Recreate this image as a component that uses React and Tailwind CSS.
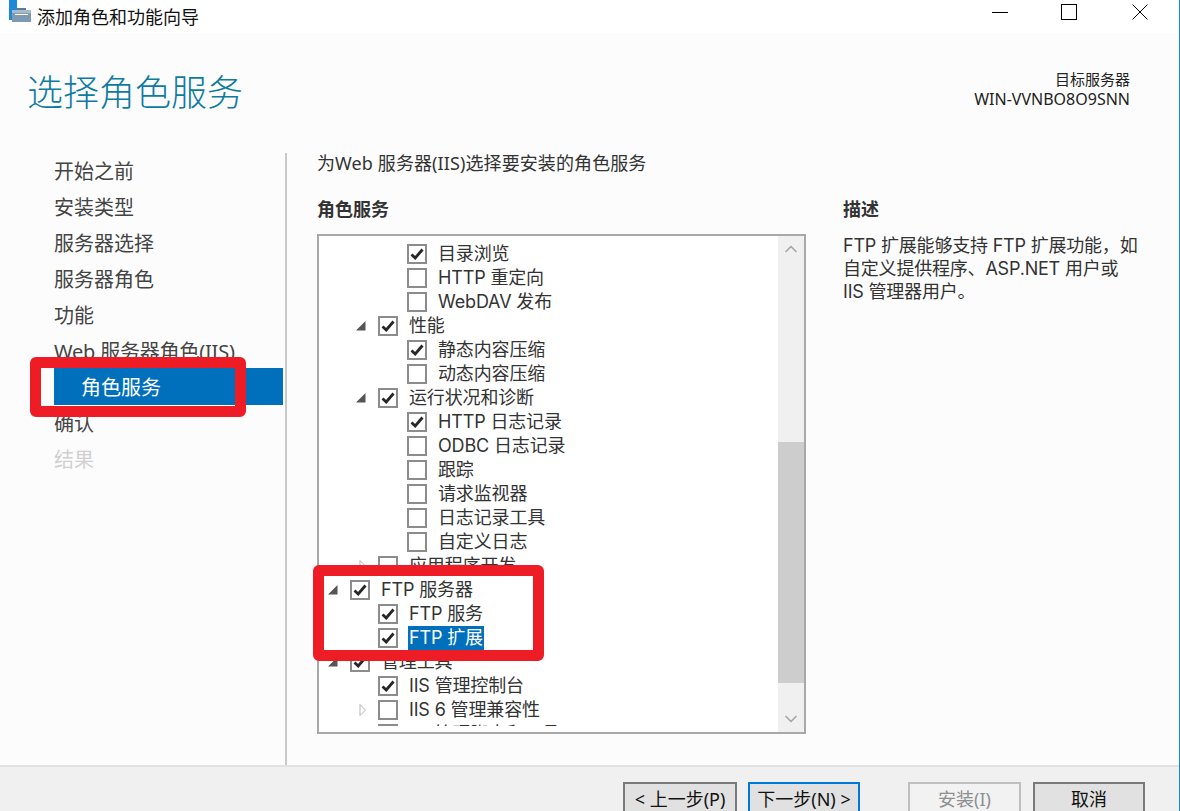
import { ChevronDown, ChevronUp } from 'lucide-react'

const steps = [
  { label: '开始之前' },
  { label: '安装类型' },
  { label: '服务器选择' },
  { label: '服务器角色' },
  { label: '功能' },
  { label: 'Web 服务器角色(IIS)', tight: true },
  { label: '角色服务', active: true },
  { label: '确认' },
  { label: '结果', disabled: true },
]

// level: indent of the row, arrow: open / closed / none
const rows = [
  { label: '目录浏览', level: 2, checked: true },
  { label: 'HTTP 重定向', level: 2 },
  { label: 'WebDAV 发布', level: 2 },
  { label: '性能', level: 1, checked: true, arrow: 'open' },
  { label: '静态内容压缩', level: 2, checked: true },
  { label: '动态内容压缩', level: 2 },
  { label: '运行状况和诊断', level: 1, checked: true, arrow: 'open' },
  { label: 'HTTP 日志记录', level: 2, checked: true },
  { label: 'ODBC 日志记录', level: 2 },
  { label: '跟踪', level: 2 },
  { label: '请求监视器', level: 2 },
  { label: '日志记录工具', level: 2 },
  { label: '自定义日志', level: 2 },
  { label: '应用程序开发', level: 1, arrow: 'closed' },
  { label: 'FTP 服务器', level: 0, checked: true, arrow: 'open' },
  { label: 'FTP 服务', level: 1, checked: true },
  { label: 'FTP 扩展', level: 1, checked: true, selected: true },
  { label: '管理工具', level: 0, checked: true, arrow: 'open' },
  { label: 'IIS 管理控制台', level: 1, checked: true },
  { label: 'IIS 6 管理兼容性', level: 1, arrow: 'closed' },
  { label: 'IIS 管理脚本和工具', level: 1 },
]

const levelPadding = ['pl-[9px]', 'pl-[37px]', 'pl-[66px]']

function Arrow({ type }) {
  if (type === 'open') {
    return (
      <svg width="10" height="10" viewBox="0 0 10 10" className="mr-[12px] shrink-0">
        <path d="M0 9.5 L9.5 9.5 L9.5 0 Z" fill="#555555" />
      </svg>
    )
  }
  if (type === 'closed') {
    return (
      <svg width="10" height="14" viewBox="0 0 10 14" className="mr-[12px] shrink-0">
        <path d="M4 1.5 L9.5 7 L4 12.5 Z" fill="#ffffff" stroke="#b5b5b5" />
      </svg>
    )
  }
  return <div className="mr-[12px] w-[10px] shrink-0" />
}

function TreeRow({ row }) {
  return (
    <div className={`flex h-[24px] items-center ${levelPadding[row.level]}`}>
      <Arrow type={row.arrow} />
      <div className="flex h-[20px] w-[20px] shrink-0 items-center justify-center border-2 border-[#8c8c8c] bg-white">
        {row.checked && (
          <svg width="14" height="12" viewBox="0 0 14 12">
            <path d="M1.5 6.5 L5.2 10 L12.5 1.5" fill="none" stroke="#262626" strokeWidth="2.8" />
          </svg>
        )}
      </div>
      <span
        className={`ml-[10px] whitespace-nowrap px-px leading-[24px] tracking-[-0.15px] ${
          row.selected ? 'bg-[#0070bd] text-white' : 'text-[#333333]'
        }`}
      >
        {row.label}
      </span>
    </div>
  )
}

function Scrollbar() {
  return (
    <div className="flex w-[26px] shrink-0 flex-col bg-[#f0f0f0]">
      <div className="flex h-[26px] items-center justify-center">
        <ChevronUp size={20} strokeWidth={2} className="text-[#a6a6a6]" />
      </div>
      <div className="h-[180px]" />
      <div className="h-[241px] bg-[#cdcdcd]" />
      <div className="flex-1" />
      <div className="flex h-[26px] items-center justify-center">
        <ChevronDown size={20} strokeWidth={2} className="text-[#a6a6a6]" />
      </div>
    </div>
  )
}

function FooterButton({ children, variant, className }) {
  const tone =
    variant === 'primary'
      ? 'border-[#0078d7] bg-[#e1e1e1] text-[#111111]'
      : variant === 'disabled'
        ? 'border-[#bfbfbf] bg-[#f2f2f2] text-[#8f8f8f]'
        : 'border-[#7a7a7a] bg-[#e1e1e1] text-[#111111]'
  return (
    <button className={`h-[33px] shrink-0 whitespace-nowrap border-2 text-[18px] leading-none ${tone} ${className}`}>
      {children}
    </button>
  )
}

export default function App() {
  return (
    <div className="relative flex h-[811px] w-[1180px] flex-col overflow-hidden border-r border-[#1a86d9] bg-[#fcfcfc] font-['Noto_Sans','Noto_Sans_CJK_SC',sans-serif] text-[18px] text-[#333333]">
      <div className="flex h-[33px] shrink-0 items-center bg-white">
        <svg width="23" height="22" viewBox="0 0 23 22" className="ml-[9px] shrink-0 self-start">
          <rect x="0" y="0" width="8" height="20" fill="#1e88d9" />
          <rect x="3" y="13" width="19" height="9" fill="#7d9ab0" />
          <rect x="3" y="10" width="19" height="3" fill="#a5bacb" />
          <rect x="8" y="8" width="9" height="2" fill="#5c7c94" />
          <rect x="6" y="14" width="13" height="1" fill="#ffffff" />
        </svg>
        <span className="ml-[5px] text-[18px] leading-none text-[#111111]">添加角色和功能向导</span>
        <div className="ml-auto flex items-start self-start pr-[31px] pt-[4px]">
          <svg width="16" height="16" viewBox="0 0 16 16">
            <path d="M0 8.5 H16" stroke="#000000" />
          </svg>
          <svg width="16" height="16" viewBox="0 0 16 16" className="ml-[53px]">
            <rect x="0.5" y="0.5" width="15" height="15" fill="none" stroke="#000000" />
          </svg>
          <svg width="16" height="16" viewBox="0 0 16 16" className="ml-[55px]">
            <path d="M0.5 0.5 L15.5 15.5 M15.5 0.5 L0.5 15.5" stroke="#000000" />
          </svg>
        </div>
      </div>

      <div className="flex h-[120px] shrink-0 items-start justify-between">
        <h1 className="ml-[27px] mt-[35px] text-[36px] font-light leading-[50px] text-[#0f7ba1]">选择角色服务</h1>
        <div className="mr-[49px] mt-[36px] text-right text-[15px] leading-[20px] text-[#222222]">
          <div>目标服务器</div>
          <div className="text-[16px]">WIN-VVNBO8O9SNN</div>
        </div>
      </div>

      <div className="flex min-h-0 flex-1">
        <nav className="flex w-[287px] shrink-0 flex-col border-r-2 border-[#c8c8c8] text-[20px]">
          {steps.map(step => (
            <div
              key={step.label}
              className={`flex shrink-0 items-center whitespace-nowrap ${step.tight ? 'tracking-[-0.2px]' : ''} ${
                step.active
                  ? 'ml-[54px] mr-[2px] mt-[-1px] h-[37px] bg-[#0070bd] pl-[27px] pt-[3px] text-white'
                  : step.disabled
                    ? 'h-[36px] pl-[54px] pt-px text-[#d0d0d0]'
                    : 'h-[36px] pl-[54px] pt-px text-[#444444]'
              }`}
            >
              {step.label}
            </div>
          ))}
        </nav>

        <main className="min-w-0 flex-1 pl-[30px]">
          <p className="leading-[20px] tracking-[0.1px] text-[#333333]">为Web 服务器(IIS)选择要安装的角色服务</p>
          <div className="mt-[24px] flex">
            <section className="w-[489px] shrink-0">
              <h2 className="text-[18px] font-bold leading-[24px] text-[#333333]">角色服务</h2>
              <div className="mt-[13px] flex h-[500px] border-2 border-[#a8a8a8] bg-white">
                <div className="h-[490px] min-w-0 flex-1 overflow-hidden pt-[6px] font-['Inter','Noto_Sans_CJK_SC',sans-serif]">
                  {rows.map(row => (
                    <TreeRow key={row.label} row={row} />
                  ))}
                </div>
                <Scrollbar />
              </div>
            </section>
            <aside className="ml-[37px] w-[310px]">
              <h2 className="text-[18px] font-bold leading-[24px] text-[#333333]">描述</h2>
              <p className="mt-[13px] font-['Inter','Noto_Sans_CJK_SC',sans-serif] text-[18px] leading-[23px] tracking-[-0.2px] text-[#333333]">
                FTP 扩展能够支持 FTP 扩展功能，如<br />
                自定义提供程序、ASP.NET 用户或<br />
                IIS 管理器用户。
              </p>
            </aside>
          </div>
        </main>
      </div>

      <footer className="flex h-[46px] shrink-0 items-start border-t-2 border-[#e2e2e2] bg-[#f0f0f0] pl-[623px] pt-[15px]">
        <FooterButton className="w-[114px]">&lt; 上一步(P)</FooterButton>
        <FooterButton variant="primary" className="ml-[11px] w-[112px]">下一步(N) &gt;</FooterButton>
        <FooterButton variant="disabled" className="ml-[48px] w-[113px]">安装(I)</FooterButton>
        <FooterButton className="ml-[12px] w-[112px]">取消</FooterButton>
      </footer>

      {/* red annotation frames drawn over the screenshot */}
      <div className="absolute left-[30px] top-[357px] h-[60px] w-[216px] rounded-[6px] border-[11px] border-[#ee1c25]" />
      <div className="absolute left-[313px] top-[565px] h-[96px] w-[231px] rounded-[6px] border-[11px] border-[#ee1c25]" />
    </div>
  )
}
